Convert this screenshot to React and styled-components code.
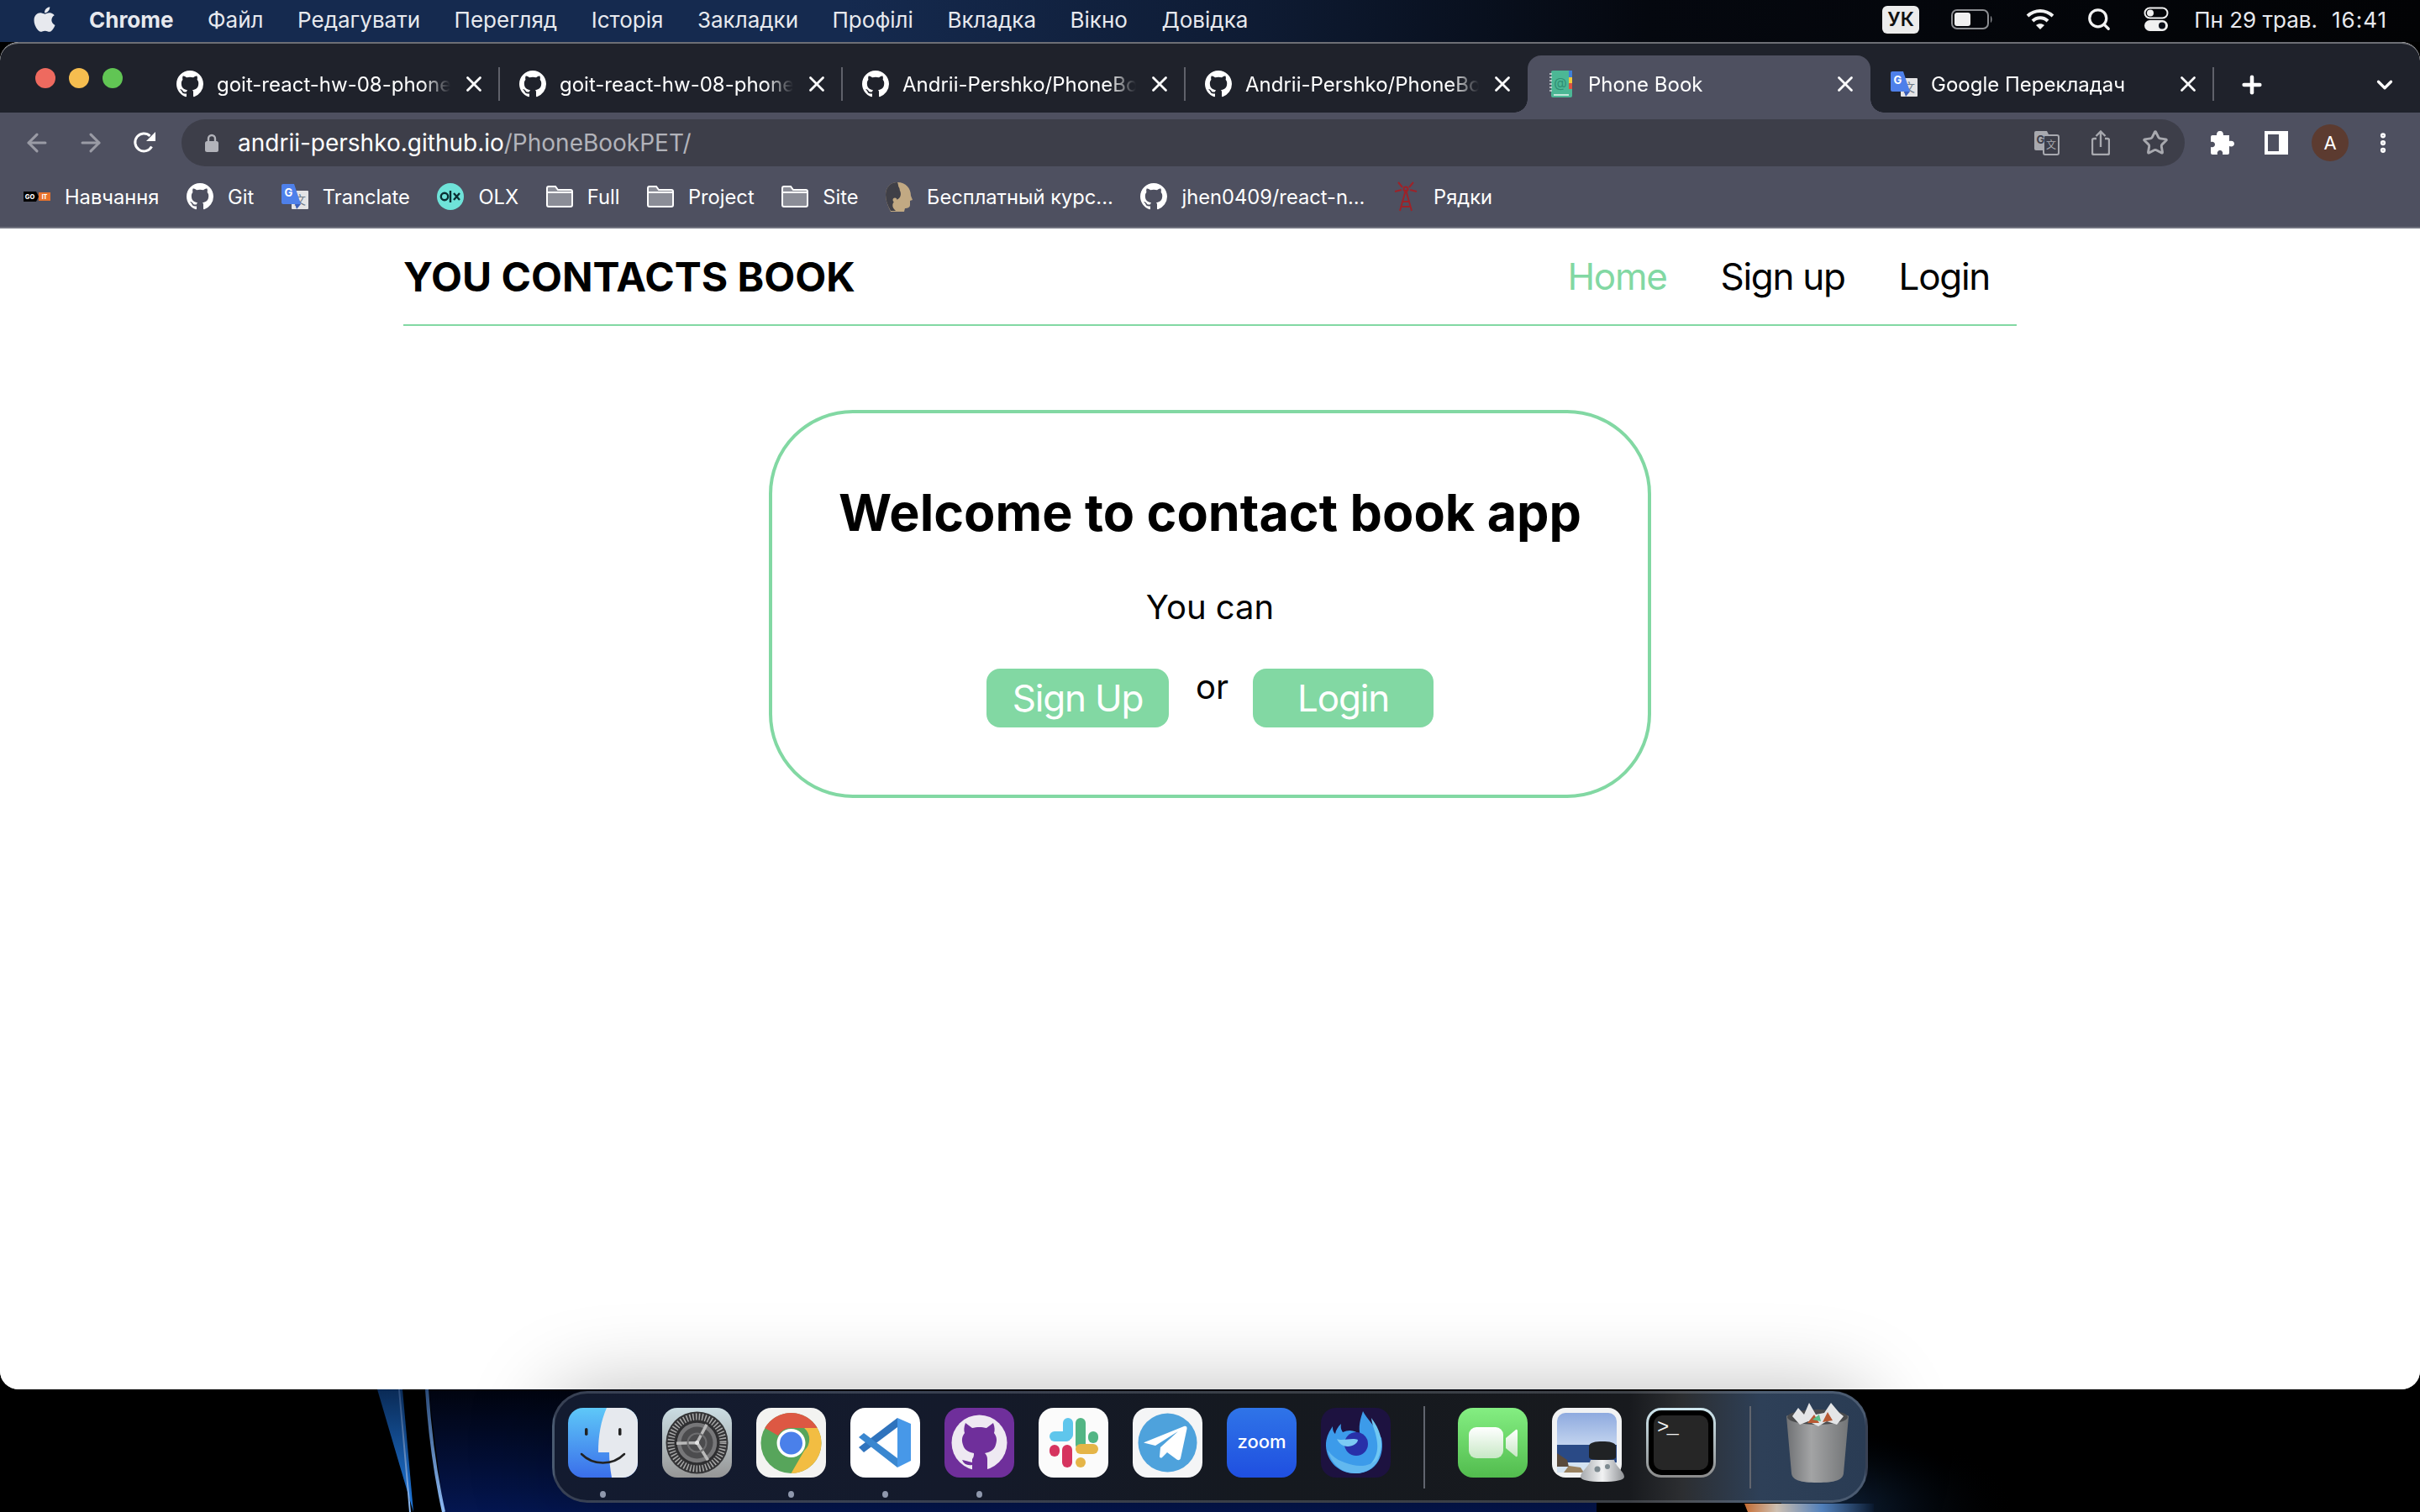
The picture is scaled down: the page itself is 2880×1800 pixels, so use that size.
import React from "react";
import styled, { createGlobalStyle } from "styled-components";
import { ArrowLeft, ArrowRight, ChevronDown, Plus, Star, X, Search, EllipsisVertical } from "lucide-react";
import { FaApple } from "react-icons/fa";

const GREEN = "#82d8a3";
const TOOLBAR = "#4e5060";

const GlobalStyle = createGlobalStyle`
  html, body {
    margin: 0;
    padding: 0;
    background: #000;
    font-family: Inter, "Noto Sans", sans-serif;
  }
`;

const Screen = styled.div`
  width: 2880px;
  height: 1800px;
  overflow: hidden;
  display: flex;
  flex-direction: column;
  background: #000;
`;

/* menu bar */
const MenuBar = styled.div`
  height: 50px;
  flex: none;
  display: flex;
  align-items: center;
  padding: 0 39px 4px 36px;
  box-sizing: border-box;
  background: linear-gradient(90deg, #152a4f 0%, #152a4f 35%, #0e1b33 52%, #05080f 68%, #020305 100%);
  color: #e7e9ee;
`;

const MenuItem = styled.span`
  font-size: 26px;
  font-weight: ${(p) => (p.$bold ? 700 : 400)};
  margin-left: ${(p) => p.$left}px;
  letter-spacing: ${(p) => p.$track ?? 0}px;
  white-space: nowrap;
`;

const MenuRight = styled.div`
  margin-left: auto;
  display: flex;
  align-items: center;
`;

const LangBadge = styled.span`
  width: 44px;
  height: 33px;
  border-radius: 6px;
  background: #ececec;
  color: #111;
  font-size: 23px;
  font-weight: 600;
  display: flex;
  align-items: center;
  justify-content: center;
  margin-right: 38px;
`;

const IconSlot = styled.span`
  display: flex;
  margin-left: ${(p) => p.$left ?? 0}px;
  margin-right: ${(p) => p.$right ?? 0}px;
`;

/* browser window */
const Window = styled.div`
  height: 1604px;
  flex: none;
  display: flex;
  flex-direction: column;
  background: #fff;
  border-radius: 22px;
  overflow: hidden;
`;

const TabStrip = styled.div`
  height: 84px;
  flex: none;
  display: flex;
  align-items: flex-end;
  background: #1f222b;
  border-top: 2px solid #6d6f75;
  box-sizing: border-box;
  position: relative;
  padding-left: 186px;
  border-radius: 22px 22px 0 0;
`;

const Lights = styled.div`
  position: absolute;
  left: 42px;
  top: 29px;
  display: flex;
  gap: 16px;
`;

const Light = styled.span`
  width: 24px;
  height: 24px;
  border-radius: 50%;
  background: ${(p) => p.$color};
`;

const Tab = styled.div`
  width: 408px;
  height: 68px;
  flex: none;
  box-sizing: border-box;
  display: flex;
  align-items: center;
  padding: 0 0 0 24px;
  position: relative;
  color: #fff;
  background: ${(p) => (p.$active ? TOOLBAR : "transparent")};
  border-radius: 16px 16px 0 0;

  ${(p) =>
    p.$active &&
    `
    &::before, &::after {
      content: "";
      position: absolute;
      bottom: 0;
      width: 16px;
      height: 16px;
    }
    &::before {
      left: -16px;
      background: radial-gradient(circle at 0 0, transparent 15.5px, ${TOOLBAR} 16px);
    }
    &::after {
      right: -16px;
      background: radial-gradient(circle at 100% 0, transparent 15.5px, ${TOOLBAR} 16px);
    }
  `}
`;

const TabTitle = styled.span`
  width: 278px;
  margin-left: 16px;
  margin-right: 13px;
  font-size: 24px;
  white-space: nowrap;
  overflow: hidden;
  -webkit-mask-image: linear-gradient(90deg, #000 88%, transparent 100%);
  mask-image: linear-gradient(90deg, #000 88%, transparent 100%);
`;

const TabSep = styled.span`
  width: 2px;
  height: 40px;
  margin: 0 -1px 14px;
  background: #5f616a;
  flex: none;
  position: relative;
  z-index: 1;
`;

const StripButton = styled.span`
  display: flex;
  color: #fff;
  align-self: center;
  margin-left: ${(p) => p.$left}px;
  margin-top: 16px;
`;

const Toolbar = styled.div`
  height: 72px;
  flex: none;
  box-sizing: border-box;
  padding-top: 8px;
  display: flex;
  background: ${TOOLBAR};
`;

const NavButton = styled.span`
  width: 64px;
  height: 56px;
  display: flex;
  align-items: center;
  justify-content: center;
  color: ${(p) => (p.$dim ? "#9a9ba5" : "#fff")};
`;

const NavGroup = styled.div`
  width: 216px;
  padding-left: 12px;
  box-sizing: border-box;
  display: flex;
`;

const UrlBar = styled.div`
  width: 2384px;
  height: 56px;
  border-radius: 28px;
  background: #3d3e49;
  display: flex;
  align-items: center;
  box-sizing: border-box;
  padding: 0 19px 0 27px;
`;

const UrlText = styled.span`
  margin-left: 22px;
  font-size: 28px;
  color: #fff;
`;

const UrlPath = styled.span`
  color: #b2b3ba;
`;

const UrlActions = styled.div`
  margin-left: auto;
  display: flex;
  align-items: center;
  gap: 38px;
`;

const ToolActions = styled.div`
  display: flex;
  align-items: center;
  height: 56px;
  margin-left: 30px;
`;

const Avatar = styled.span`
  width: 44px;
  height: 44px;
  border-radius: 50%;
  background: #5c3b30;
  color: #fff;
  font-size: 22px;
  display: flex;
  align-items: center;
  justify-content: center;
  margin: 0 26px 0 28px;
`;

const Bookmarks = styled.div`
  height: 66px;
  flex: none;
  box-sizing: border-box;
  padding: 0 0 8px 28px;
  display: flex;
  align-items: center;
  gap: 32.6px;
  background: ${TOOLBAR};
  border-bottom: 2px solid #71737f;
`;

const Bookmark = styled.div`
  display: flex;
  align-items: center;
  gap: 17px;
  font-size: 23.7px;
  color: #fff;
  white-space: nowrap;
`;

/* page */
const Page = styled.div`
  flex: 1;
  background: #fff;
`;

const Container = styled.div`
  width: 1920px;
  margin: 0 auto;
`;

const Header = styled.header`
  height: 116px;
  box-sizing: border-box;
  display: flex;
  align-items: center;
  justify-content: space-between;
  border-bottom: 2px solid ${GREEN};
  padding-right: 32px;
  color: #000;
`;

const Logo = styled.div`
  font-size: 48px;
  font-weight: 700;
`;

const Nav = styled.nav`
  display: flex;
  gap: 64px;
`;

const NavLink = styled.a`
  font-size: 44px;
  letter-spacing: -1.3px;
  color: ${(p) => (p.$active ? GREEN : "#000")};
`;

const Card = styled.section`
  width: 1050px;
  height: 462px;
  margin: 100px auto 0;
  box-sizing: border-box;
  border: 4px solid ${GREEN};
  border-radius: 100px;
  display: flex;
  flex-direction: column;
  align-items: center;
  padding-top: 78px;
  color: #000;
`;

const Title = styled.h1`
  margin: 0;
  font-size: 61px;
  font-weight: 700;
  line-height: 80px;
`;

const Lead = styled.p`
  margin: 45px 0 0;
  font-size: 40px;
  line-height: 56px;
`;

const Actions = styled.div`
  margin-top: 45px;
  display: flex;
  align-items: flex-start;
`;

const Or = styled.span`
  width: 36px;
  margin: 0 32px;
  text-align: center;
  font-size: 40px;
  line-height: 44px;
`;

const ActionButton = styled.button`
  width: ${(p) => p.$width}px;
  height: 70px;
  border: none;
  border-radius: 16px;
  background: ${GREEN};
  color: #fff;
  font-family: inherit;
  font-size: 44px;
  letter-spacing: -1.2px;
  padding: 0;
`;

/* dock */
const DockArea = styled.div`
  flex: 1;
  position: relative;
  z-index: 1;
`;

const Wallpaper = styled.svg`
  position: absolute;
  left: 0;
  top: 0;
  width: 2880px;
  height: 146px;
`;

const Dock = styled.div`
  position: absolute;
  left: 657px;
  top: 2px;
  width: 1566px;
  height: 133px;
  box-sizing: border-box;
  border: 3px solid rgba(190, 200, 215, 0.22);
  border-radius: 42px;
  padding: 17px 0 0 16px;
  display: flex;
  align-items: flex-start;
  background: linear-gradient(90deg, #131b30 0%, #141a2b 30%, #15191f 55%, #181a1e 82%, #2c2e31 86%, #2e4058 92%, #2a3c54 100%);
  box-shadow: 0 0 100px rgba(0, 0, 0, 0.27);
`;

const DockItem = styled.div`
  width: 83px;
  height: 83px;
  flex: none;
  margin-top: ${(p) => p.$top ?? 0}px;
  margin-right: ${(p) => p.$gap ?? 29}px;
  position: relative;

  ${(p) =>
    p.$running &&
    `
    &::after {
      content: "";
      position: absolute;
      left: 38px;
      top: 99px;
      width: 7px;
      height: 8px;
      border-radius: 50%;
      background: #8f98ad;
    }
  `}
`;

const DockDivider = styled.span`
  width: 2px;
  height: 98px;
  margin: -2px ${(p) => p.$right}px 0 ${(p) => p.$left}px;
  flex: none;
  background: #61656e;
`;

const GithubMark = ({ size = 32 }) => (
  <svg width={size} height={size} viewBox="0 0 16 16" fill="#fff">
    <path d="M8 0C3.58 0 0 3.58 0 8c0 3.54 2.29 6.53 5.47 7.59.4.07.55-.17.55-.38 0-.19-.01-.82-.01-1.49-2.01.37-2.53-.49-2.69-.94-.09-.23-.48-.94-.82-1.13-.28-.15-.68-.52-.01-.53.63-.01 1.08.58 1.23.82.72 1.21 1.87.87 2.33.66.07-.52.28-.87.51-1.07-1.78-.2-3.64-.89-3.64-3.95 0-.87.31-1.59.82-2.15-.08-.2-.36-1.02.08-2.12 0 0 .67-.21 2.2.82.64-.18 1.32-.27 2-.27.68 0 1.36.09 2 .27 1.53-1.04 2.2-.82 2.2-.82.44 1.1.16 1.92.08 2.12.51.56.82 1.27.82 2.15 0 3.07-1.87 3.75-3.65 3.95.29.25.54.73.54 1.48 0 1.07-.01 1.93-.01 2.2 0 .21.15.46.55.38A8.013 8.013 0 0016 8c0-4.42-3.58-8-8-8z" />
  </svg>
);

const TranslateIcon = () => (
  <svg width="32" height="32" viewBox="0 0 32 32">
    <rect x="12" y="9" width="20" height="22" rx="1" fill="#e4e4e6" />
    <text x="22" y="25" fontSize="14" fontFamily="Noto Sans CJK SC, sans-serif" fill="#6f7a86" textAnchor="middle">文</text>
    <path d="M2 1h13l8 24H2a2 2 0 0 1-2-2V3a2 2 0 0 1 2-2z" fill="#4e80ea" />
    <path d="M16 25h7l-5 6z" fill="#3c5fb8" />
    <text x="8.5" y="16" fontSize="13" fontWeight="700" fontFamily="Inter, sans-serif" fill="#fff" textAnchor="middle">G</text>
  </svg>
);

const FolderIcon = () => (
  <svg width="32" height="26" viewBox="0 0 32 26">
    <path d="M1 3a2 2 0 0 1 2-2h8l3 4h15a2 2 0 0 1 2 2v16a2 2 0 0 1-2 2H3a2 2 0 0 1-2-2z" fill="#8b8d97" stroke="#fff" strokeWidth="2" />
    <path d="M1 8h30" stroke="#fff" strokeWidth="2" />
  </svg>
);

const GoItIcon = () => (
  <svg width="32" height="12" viewBox="0 0 32 12">
    <path d="M0 0h15l3 6-3 6H0z" fill="#000" />
    <text x="7.5" y="9" fontSize="7.5" fontWeight="800" fontFamily="Inter, sans-serif" fill="#fff" textAnchor="middle">GO</text>
    <rect x="18" y="1" width="14" height="10" fill="#e8732c" />
    <text x="25" y="9" fontSize="7" fontWeight="800" fontFamily="Inter, sans-serif" fill="#fff" textAnchor="middle">IT</text>
  </svg>
);

const OlxIcon = () => (
  <svg width="32" height="32" viewBox="0 0 32 32">
    <circle cx="16" cy="16" r="16" fill="#6fe3d9" />
    <circle cx="9" cy="16" r="4.2" fill="none" stroke="#0b2f33" strokeWidth="2.4" />
    <path d="M16 9v14" stroke="#0b2f33" strokeWidth="2.4" />
    <path d="M20 12l7 8M27 12l-7 8" stroke="#0b2f33" strokeWidth="2.4" />
  </svg>
);

const HeadIcon = () => (
  <svg width="32" height="36" viewBox="0 0 32 36">
    <path d="M14 1c10 0 16 7 16 16l2 5-3 1v5c0 3-3 4-6 4l-1 4H6C2 28 0 22 0 16 0 7 6 1 14 1z" fill="#c2a983" />
    <path d="M14 1C6 1 0 7 0 16c0 6 2 12 6 19h6c-6-5-4-11 1-13 5-2 6-7 4-11-2-4-2-8-3-10z" fill="#3f3f47" />
    <circle cx="14" cy="9" r="2.5" fill="#3f3f47" />
    <circle cx="11" cy="22" r="2.5" fill="#c2a983" />
  </svg>
);

const TowerIcon = () => (
  <svg width="32" height="36" viewBox="0 0 32 36" fill="none" stroke="#9e2228" strokeWidth="2">
    <path d="M16 10L9 35M16 10l7 25M12 24h8M11 30h10" />
    <circle cx="16" cy="9" r="2.5" />
    <path d="M7 1l5 6M25 1l-5 6M3 12l8-2M29 12l-8-2" />
  </svg>
);

const ContactBookIcon = () => (
  <svg width="32" height="34" viewBox="0 0 30 34">
    <rect x="3" y="1" width="25" height="32" rx="2" fill="#4cb795" />
    <rect x="24" y="1" width="4" height="8" fill="#3f7fd8" />
    <rect x="24" y="9" width="4" height="7" fill="#f1c93a" />
    <rect x="24" y="16" width="4" height="7" fill="#dd5342" />
    <path d="M6 30h18" stroke="#e8f6f0" strokeWidth="1.5" />
    <path d="M1 5h3M1 9h3M1 13h3M1 17h3M1 21h3M1 25h3" stroke="#d5d7db" strokeWidth="1.6" />
    <text x="14" y="21" fontSize="16" fontFamily="Inter, sans-serif" fill="#2f8f74" textAnchor="middle">@</text>
  </svg>
);

const ReloadIcon = () => (
  <svg width="30" height="30" viewBox="0 0 30 30" fill="none">
    <path d="M23.5 19.5A10.5 10.5 0 1 1 21.5 6.8" stroke="#fff" strokeWidth="3" />
    <path d="M28 2v11H17z" fill="#fff" />
  </svg>
);

const LockIcon = () => (
  <svg width="18" height="22" viewBox="0 0 18 22" fill="none">
    <path d="M5 10V6a4 4 0 0 1 8 0v4" stroke="#b2b3ba" strokeWidth="2.4" />
    <rect x="1" y="9" width="16" height="13" rx="2.5" fill="#b2b3ba" />
  </svg>
);

const UrlTranslateIcon = () => (
  <svg width="30" height="30" viewBox="0 0 30 30">
    <path d="M2 1h13l2 4 0 19H2a2 2 0 0 1-2-2V3a2 2 0 0 1 2-2z" fill="#a8a9af" />
    <rect x="11" y="6" width="18" height="23" rx="2" fill="#3d3e49" stroke="#a8a9af" strokeWidth="2" />
    <text x="7.5" y="16" fontSize="13" fontWeight="700" fontFamily="Inter, sans-serif" fill="#3d3e49" textAnchor="middle">G</text>
    <text x="20" y="22" fontSize="12" fontFamily="Noto Sans CJK SC, sans-serif" fill="#a8a9af" textAnchor="middle">文</text>
  </svg>
);

const ShareIcon = () => (
  <svg width="22" height="30" viewBox="0 0 22 30" fill="none" stroke="#a8a9af" strokeWidth="2.4">
    <path d="M6 10H3a2 2 0 0 0-2 2v15a2 2 0 0 0 2 2h16a2 2 0 0 0 2-2V12a2 2 0 0 0-2-2h-3" />
    <path d="M11 20V2M5.5 7L11 1.5 16.5 7" />
  </svg>
);

const PuzzleIcon = () => (
  <svg width="30" height="30" viewBox="0 0 30 30" fill="#fff">
    <path d="M12 1c3 0 4 2 4 5h7v7c3-1 6 0 6 3s-3 4-6 3v8a2 2 0 0 1-2 2h-6c1-3-1-5-3-5s-4 2-3 5H3a2 2 0 0 1-2-2v-7c3 1 5-1 5-3s-2-4-5-3V8a2 2 0 0 1 2-2h5c0-3 1-5 4-5z" />
  </svg>
);

const SidebarIcon = () => (
  <svg width="28" height="28" viewBox="0 0 28 28" fill="none" stroke="#fff">
    <rect x="2" y="2" width="24" height="24" strokeWidth="4" />
    <rect x="17" y="2" width="9" height="24" fill="#fff" strokeWidth="0" />
  </svg>
);

const BatteryIcon = () => (
  <svg width="50" height="26" viewBox="0 0 50 26" fill="none">
    <rect x="1" y="2" width="43" height="22" rx="6" stroke="#8b8d91" strokeWidth="2" />
    <rect x="4" y="5" width="19" height="16" rx="3" fill="#f0f0f0" />
    <path d="M47 9c2 1 2 7 0 8z" fill="#8b8d91" />
  </svg>
);

const WifiIcon = () => (
  <svg width="34" height="26" viewBox="0 0 34 26" fill="none" stroke="#f2f2f2" strokeWidth="4">
    <path d="M2 9c9-8 21-8 30 0" />
    <path d="M8 15c5-5 13-5 18 0" />
    <path d="M17 25l-5-5c3-2.500 7-2.500 10 0z" fill="#f2f2f2" stroke="none" />
  </svg>
);

const ControlIcon = () => (
  <svg width="30" height="30" viewBox="0 0 30 30">
    <rect x="1.500" y="1.500" width="27" height="12" rx="6" fill="none" stroke="#f0f0f0" strokeWidth="2" />
    <circle cx="8" cy="7.500" r="4" fill="#f0f0f0" />
    <rect x="1" y="16" width="28" height="13" rx="6.500" fill="#f0f0f0" />
    <circle cx="22" cy="22.500" r="4" fill="#0a0e18" />
  </svg>
);

/* dock icons */
const FinderIcon = () => (
  <svg width="83" height="83" viewBox="0 0 83 83">
    <defs>
      <linearGradient id="fb" x1="0" y1="0" x2="0" y2="1">
        <stop offset="0" stopColor="#5ec8f8" />
        <stop offset="1" stopColor="#3a6eea" />
      </linearGradient>
      <clipPath id="fc"><rect width="83" height="83" rx="18" /></clipPath>
    </defs>
    <g clipPath="url(#fc)">
      <rect width="83" height="83" fill="url(#fb)" />
      <path d="M46 0h37v83H52c-2-11-3-21-3-30H36c0-20 3-37 10-53z" fill="#e6e9ee" />
    </g>
    <rect x="20" y="24" width="3.500" height="9" rx="1.750" fill="#222" />
    <rect x="60" y="24" width="3.500" height="9" rx="1.750" fill="#222" />
    <path d="M16 55c14 14 37 14 51 0" fill="none" stroke="#222" strokeWidth="2.500" strokeLinecap="round" />
  </svg>
);

const SettingsIcon = () => (
  <svg width="83" height="83" viewBox="0 0 83 83">
    <defs>
      <linearGradient id="sb" x1="0" y1="0" x2="0" y2="1">
        <stop offset="0" stopColor="#cbdde3" />
        <stop offset="1" stopColor="#969696" />
      </linearGradient>
    </defs>
    <rect width="83" height="83" rx="18" fill="url(#sb)" />
    <circle cx="41.500" cy="41.500" r="37" fill="#343436" />
    <circle cx="41.500" cy="41.500" r="31" fill="none" stroke="#a9a9a9" strokeWidth="8" strokeDasharray="1.500 2.200" />
    <circle cx="41.500" cy="41.500" r="25" fill="#777779" stroke="#2e2e30" strokeWidth="2.500" />
    <circle cx="41.500" cy="41.500" r="19" fill="#4c4c4e" />
    <g transform="rotate(28 41.500 41.500)" stroke="#b9b9b9" strokeWidth="3.500">
      <path d="M41.500 41.500V17M41.500 41.500L20.300 53.700M41.500 41.500L62.700 53.700" />
    </g>
    <circle cx="41.500" cy="41.500" r="11" fill="none" stroke="#6d6d6f" strokeWidth="2" />
    <circle cx="41.500" cy="41.500" r="2.500" fill="#e5e5e5" />
  </svg>
);

const ChromeIcon = () => (
  <svg width="83" height="83" viewBox="0 0 83 83">
    <rect width="83" height="83" rx="18" fill="#f3f3f1" />
    <circle cx="41.500" cy="42" r="36" fill="#57a55b" />
    <path d="M41.500 6a36 36 0 0 1 31.200 18H41.500a18 18 0 0 0-15.600 9L10.300 24A36 36 0 0 1 41.500 6z" fill="#dd5843" />
    <path d="M72.700 24a36 36 0 0 1-31.200 54l15.600-27a18 18 0 0 0 0-27z" fill="#f2bd42" />
    <circle cx="41.500" cy="42" r="17" fill="#fff" />
    <circle cx="41.500" cy="42" r="13.500" fill="#4a80ea" />
  </svg>
);

const VscodeIcon = () => (
  <svg width="83" height="83" viewBox="0 0 83 83">
    <rect width="83" height="83" rx="18" fill="#fff" />
    <path d="M56 12L10 47l6 6 40-30z" fill="#2f73bd" />
    <path d="M10 35l6-5 40 30v11z" fill="#3a87d0" />
    <path d="M56 12l16 7v44l-16 8z" fill="#4798e8" />
  </svg>
);

const GithubDockIcon = () => (
  <svg width="83" height="83" viewBox="0 0 83 83">
    <rect width="83" height="83" rx="18" fill="#6f2f9b" />
    <circle cx="41.500" cy="41.500" r="33" fill="#eee9f2" />
    <path d="M25 18l8 6c5-1.500 12-1.500 17 0l8-6c2 5 2 9 1 12 3 4 4 8 2 14-2 7-8 9-13 10 2 2 3 4 3 7v16H33v-9c-6 1-10-1-12-6 3 1 6 1 8 2l4 1v-4c2-2 2-5 2-7-5-1-11-3-13-10-2-6-1-10 2-14-1-3-1-7 1-12z" fill="#6f2f9b" />
  </svg>
);

const SlackIcon = () => (
  <svg width="83" height="83" viewBox="0 0 83 83">
    <rect width="83" height="83" rx="18" fill="#fbfbfb" />
    <g fill="#5fc6ec">
      <rect x="29" y="12" width="12" height="26" rx="6" />
      <rect x="13" y="28" width="26" height="12" rx="6" />
    </g>
    <g fill="#52b584">
      <rect x="44" y="12" width="12" height="38" rx="6" />
      <rect x="59" y="28" width="12" height="14" rx="6" />
    </g>
    <g fill="#d6345f">
      <rect x="13" y="44" width="12" height="14" rx="6" />
      <rect x="28" y="44" width="12" height="27" rx="6" />
    </g>
    <g fill="#e5b548">
      <rect x="44" y="43" width="27" height="12" rx="6" />
      <rect x="44" y="59" width="12" height="12" rx="6" />
    </g>
  </svg>
);

const TelegramIcon = () => (
  <svg width="83" height="83" viewBox="0 0 83 83">
    <rect width="83" height="83" rx="18" fill="#f4f5f6" />
    <circle cx="41.500" cy="41.500" r="35" fill="#4ea2dc" />
    <path d="M14 41l47-19c2-1 4 0 3.500 3L57 60c-.5 2-2.500 3-4.500 1.500L41 53l-6 6c-1 1-3 .5-3-1l1-11 21-19-27 17-12-3c-2-.5-2-1-1-1z" fill="#fff" />
  </svg>
);

const ZoomIcon = () => (
  <svg width="83" height="83" viewBox="0 0 83 83">
    <defs>
      <linearGradient id="zb" x1="0" y1="0" x2="0" y2="1">
        <stop offset="0" stopColor="#2f74e8" />
        <stop offset="1" stopColor="#1f4fe0" />
      </linearGradient>
    </defs>
    <rect width="83" height="83" rx="18" fill="url(#zb)" />
    <text x="41.500" y="48" fontSize="22" fontWeight="500" fontFamily="Inter, sans-serif" fill="#fff" textAnchor="middle">zoom</text>
  </svg>
);

const FirefoxIcon = () => (
  <svg width="83" height="83" viewBox="0 0 83 83">
    <rect width="83" height="83" rx="18" fill="#1d1240" />
    <path d="M50 4c4 8 16 20 22 32 4 18-4 42-31 42C18 78 5 60 6 42c1-9 4-14 8-20 0 5 1 7 3 9 1-5 3-8 7-12-1 6 1 8 2 10 8-4 16-2 21 4-3-10 0-20 3-29z" fill="#3c9bea" />
    <path d="M60 12c6 8 13 20 12 34-2 20-16 32-33 32 18-4 30-18 28-36-1-12-6-20-7-30z" fill="#70c8f3" />
    <path d="M8 50c4 16 16 28 33 28 14 0 25-8 29-20-8 10-20 13-32 10-13-3-24-8-30-18z" fill="#62b8ef" />
    <circle cx="42" cy="43" r="14" fill="#2830a8" />
    <path d="M19 37c6 3 18-2 25 1 0 4-6 8-12 8-6 0-11-4-13-9z" fill="#7ccaf4" />
  </svg>
);

const FaceTimeIcon = () => (
  <svg width="83" height="83" viewBox="0 0 83 83">
    <defs>
      <linearGradient id="ftb" x1="0" y1="0" x2="0" y2="1">
        <stop offset="0" stopColor="#84ee82" />
        <stop offset="1" stopColor="#52bc4e" />
      </linearGradient>
      <linearGradient id="ftw" x1="0" y1="0" x2="0" y2="1">
        <stop offset="0" stopColor="#fff" />
        <stop offset="1" stopColor="#c8e8c6" />
      </linearGradient>
    </defs>
    <rect width="83" height="83" rx="18" fill="url(#ftb)" />
    <rect x="13" y="23" width="41" height="37" rx="9" fill="url(#ftw)" />
    <path d="M57 36l12-10c1-.5 2 0 2 2v28c0 2-1 2.500-2 2L57 48z" fill="url(#ftw)" />
  </svg>
);

const PreviewIcon = () => (
  <svg width="90" height="90" viewBox="0 0 90 90">
    <defs>
      <linearGradient id="pv" x1="0" y1="0" x2="0" y2="1">
        <stop offset="0" stopColor="#8eaadf" />
        <stop offset="1" stopColor="#cddcf2" />
      </linearGradient>
      <linearGradient id="gl" x1="0" y1="0" x2="1" y2="0">
        <stop offset="0" stopColor="#a6a9ad" />
        <stop offset=".5" stopColor="#f1f2f3" />
        <stop offset="1" stopColor="#8f9296" />
      </linearGradient>
    </defs>
    <rect width="83" height="83" rx="16" fill="#f1f2f3" />
    <path d="M6 16a10 10 0 0 1 10-10h51a10 10 0 0 1 10 10v36H6z" fill="url(#pv)" />
    <path d="M6 44h71v33H6z" fill="#d4e3f2" />
    <path d="M6 44h71v21H6z" fill="#2a4a86" />
    <path d="M6 54l12 8 2 8H6z" fill="#5a4a3c" />
    <path d="M14 77l6-8 14 2 4 6z" fill="#9a8260" />
    <path d="M46 62h28c2 8 12 14 12 20 0 4-10 6-26 6s-26-2-26-6c0-6 10-12 12-20z" fill="url(#gl)" />
    <path d="M44 46c0-5 8-6 16-6s16 1 16 6v12c0 3-3 4-16 4s-16-1-16-4z" fill="#202224" />
    <circle cx="54" cy="73" r="3.500" fill="#7d8a90" />
    <circle cx="66" cy="70" r="3" fill="#7d8a90" />
  </svg>
);

const TerminalIcon = () => (
  <svg width="83" height="83" viewBox="0 0 83 83">
    <defs>
      <linearGradient id="tb" x1="0" y1="0" x2="0" y2="1">
        <stop offset="0" stopColor="#cfe7ef" />
        <stop offset="1" stopColor="#8b8b8b" />
      </linearGradient>
    </defs>
    <rect width="83" height="83" rx="18" fill="url(#tb)" />
    <rect x="3" y="3" width="77" height="77" rx="15" fill="#000" />
    <rect x="9" y="9" width="65" height="65" rx="10" fill="#262626" />
    <text x="13" y="30" fontSize="24" fontFamily="Liberation Mono, monospace" fill="#f2f2f2" textLength="26">{">_"}</text>
  </svg>
);

const TrashIcon = () => (
  <svg width="76" height="98" viewBox="0 0 76 98">
    <defs>
      <linearGradient id="tr" x1="0" y1="0" x2="1" y2="0">
        <stop offset="0" stopColor="#6f7174" />
        <stop offset=".4" stopColor="#a3a4a5" />
        <stop offset="1" stopColor="#737577" />
      </linearGradient>
    </defs>
    <path d="M1 18c0-4 74-4 74 0l-6 68c-1 8-10 11-31 11S8 94 7 86z" fill="url(#tr)" />
    <ellipse cx="38" cy="19" rx="36" ry="9" fill="#4b4c4e" />
    <path d="M8 18l7-10 7 8 6-14 8 14 10-2 8-12 10 12 5 4-8 10-12-4-10 6-12-6-10 4z" fill="#e4e5e7" />
    <path d="M26 26l8-10 6 10zM44 25l6-12 6 10z" fill="#b85a34" />
    <path d="M32 22l8-6 2 8z" fill="#58c08a" />
  </svg>
);

const tabs = [
  { title: "goit-react-hw-08-phonebook", icon: <GithubMark /> },
  { title: "goit-react-hw-08-phonebook", icon: <GithubMark /> },
  { title: "Andrii-Pershko/PhoneBookPET", icon: <GithubMark /> },
  { title: "Andrii-Pershko/PhoneBookPET", icon: <GithubMark /> },
  { title: "Phone Book", icon: <ContactBookIcon />, active: true },
  { title: "Google Перекладач", icon: <TranslateIcon /> },
];

const menu = ["Файл", "Редагувати", "Перегляд", "Історія", "Закладки", "Профілі", "Вкладка", "Вікно", "Довідка"];

const bookmarks = [
  { label: "Навчання", icon: <GoItIcon /> },
  { label: "Git", icon: <GithubMark /> },
  { label: "Tranclate", icon: <TranslateIcon /> },
  { label: "OLX", icon: <OlxIcon /> },
  { label: "Full", icon: <FolderIcon /> },
  { label: "Project", icon: <FolderIcon /> },
  { label: "Site", icon: <FolderIcon /> },
  { label: "Бесплатный курс...", icon: <HeadIcon /> },
  { label: "jhen0409/react-n...", icon: <GithubMark /> },
  { label: "Рядки", icon: <TowerIcon /> },
];

const App = () => (
  <Screen>
    <GlobalStyle />
    <MenuBar>
      <FaApple size={34} color="#e7e9ee" />
      <MenuItem $bold $left={36}>Chrome</MenuItem>
      {menu.map((name) => (
        <MenuItem key={name} $left={40.5}>{name}</MenuItem>
      ))}
      <MenuRight>
        <LangBadge>УК</LangBadge>
        <IconSlot $right={39}><BatteryIcon /></IconSlot>
        <IconSlot $right={38}><WifiIcon /></IconSlot>
        <IconSlot $right={38}><Search size={30} color="#f2f2f2" strokeWidth={2.6} /></IconSlot>
        <IconSlot $right={30}><ControlIcon /></IconSlot>
        <MenuItem $left={0}>Пн 29 трав.</MenuItem>
        <MenuItem $left={17} $track={1}>16:41</MenuItem>
      </MenuRight>
    </MenuBar>

    <Window>
      <TabStrip>
        <Lights>
          <Light $color="#ee6a5f" />
          <Light $color="#f5bd4f" />
          <Light $color="#61c554" />
        </Lights>
        {tabs.map((tab, i) => (
          <React.Fragment key={i}>
            {i > 0 && i < 4 && <TabSep />}
            <Tab $active={tab.active}>
              {tab.icon}
              <TabTitle>{tab.title}</TabTitle>
              <X size={30} color="#fff" strokeWidth={2.2} />
            </Tab>
          </React.Fragment>
        ))}
        <TabSep />
        <StripButton $left={30}><Plus size={32} strokeWidth={3.4} /></StripButton>
        <StripButton $left={127}><ChevronDown size={30} strokeWidth={2.6} /></StripButton>
      </TabStrip>

      <Toolbar>
        <NavGroup>
          <NavButton $dim><ArrowLeft size={34} strokeWidth={2.2} /></NavButton>
          <NavButton $dim><ArrowRight size={34} strokeWidth={2.2} /></NavButton>
          <NavButton><ReloadIcon /></NavButton>
        </NavGroup>
        <UrlBar>
          <LockIcon />
          <UrlText>andrii-pershko.github.io<UrlPath>/PhoneBookPET/</UrlPath></UrlText>
          <UrlActions>
            <UrlTranslateIcon />
            <ShareIcon />
            <Star size={32} color="#a8a9af" strokeWidth={2.2} />
          </UrlActions>
        </UrlBar>
        <ToolActions>
          <PuzzleIcon />
          <IconSlot $left={35}><SidebarIcon /></IconSlot>
          <Avatar>A</Avatar>
          <EllipsisVertical size={30} color="#fff" strokeWidth={3} />
        </ToolActions>
      </Toolbar>

      <Bookmarks>
        {bookmarks.map((b) => (
          <Bookmark key={b.label}>
            {b.icon}
            <span>{b.label}</span>
          </Bookmark>
        ))}
      </Bookmarks>

      <Page>
        <Container>
          <Header>
            <Logo>YOU CONTACTS BOOK</Logo>
            <Nav>
              <NavLink $active>Home</NavLink>
              <NavLink>Sign up</NavLink>
              <NavLink>Login</NavLink>
            </Nav>
          </Header>
          <Card>
            <Title>Welcome to contact book app</Title>
            <Lead>You can</Lead>
            <Actions>
              <ActionButton $width={217}>Sign Up</ActionButton>
              <Or>or</Or>
              <ActionButton $width={215}>Login</ActionButton>
            </Actions>
          </Card>
        </Container>
      </Page>
    </Window>

    <DockArea>
      <Wallpaper viewBox="0 0 2880 146">
        <defs>
          <linearGradient id="navy" x1="0" y1="0" x2="0" y2="1">
            <stop offset="0" stopColor="#01040f" />
            <stop offset="1" stopColor="#041650" />
          </linearGradient>
          <linearGradient id="streak" x1="0" y1="0" x2="0" y2="1">
            <stop offset="0" stopColor="#0a2a55" />
            <stop offset="1" stopColor="#1f7ae0" />
          </linearGradient>
          <linearGradient id="edge" gradientUnits="userSpaceOnUse" x1="0" y1="0" x2="0" y2="146">
            <stop offset="0" stopColor="#2a4a78" />
            <stop offset="1" stopColor="#8fbcf5" />
          </linearGradient>
          <linearGradient id="flare" x1="0" y1="0" x2="1" y2="0">
            <stop offset="0" stopColor="#e07b3a" />
            <stop offset=".25" stopColor="#e8d8c8" />
            <stop offset=".6" stopColor="#5a8ed0" />
            <stop offset="1" stopColor="#0a1a30" />
          </linearGradient>
          <radialGradient id="glow" cx="0" cy="1" r="1">
            <stop offset="0" stopColor="#1a3b66" />
            <stop offset="1" stopColor="#000" stopOpacity="0" />
          </radialGradient>
        </defs>
        <path d="M510 0H1900V146H528z" fill="url(#navy)" />
        <path d="M449 0h30L492 146z" fill="url(#streak)" />
        <path d="M475 0L488 146" stroke="url(#edge)" strokeWidth="2" fill="none" />
        <path d="M508 0C512 60 520 110 528 146" stroke="url(#edge)" strokeWidth="4" fill="none" />
        <rect x="1900" y="0" width="500" height="146" fill="#000" />
        <rect x="2120" y="30" width="280" height="116" fill="url(#glow)" />
        <path d="M2076 136H2230V146H2080z" fill="url(#flare)" />
      </Wallpaper>
      <Dock>
        <DockItem $running><FinderIcon /></DockItem>
        <DockItem><SettingsIcon /></DockItem>
        <DockItem $running><ChromeIcon /></DockItem>
        <DockItem $running><VscodeIcon /></DockItem>
        <DockItem $running><GithubDockIcon /></DockItem>
        <DockItem><SlackIcon /></DockItem>
        <DockItem><TelegramIcon /></DockItem>
        <DockItem><ZoomIcon /></DockItem>
        <DockItem $gap={0}><FirefoxIcon /></DockItem>
        <DockDivider $left={39} $right={39} />
        <DockItem><FaceTimeIcon /></DockItem>
        <DockItem><PreviewIcon /></DockItem>
        <DockItem $gap={0}><TerminalIcon /></DockItem>
        <DockDivider $left={40} $right={41} />
        <DockItem $top={-8}><TrashIcon /></DockItem>
      </Dock>
    </DockArea>
  </Screen>
);

export default App;
